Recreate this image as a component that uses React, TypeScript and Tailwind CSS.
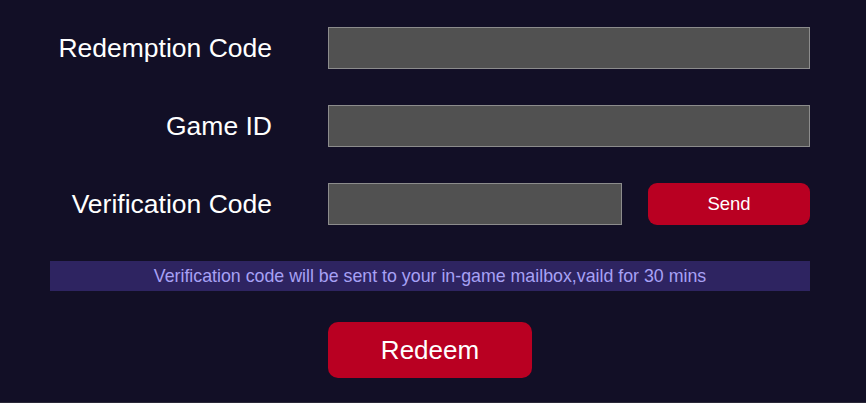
import React from "react";

function Row({ label, children }: { label: string; children: React.ReactNode }) {
  return (
    <div className="flex h-[42px] items-center">
      <div className="w-[272px] shrink-0 text-right text-[26.5px] leading-none text-white">{label}</div>
      <div className="ml-[56px] flex h-full w-[482px] items-stretch">{children}</div>
    </div>
  );
}

export default function App() {
  return (
    <div
      className="flex h-[403px] w-[866px] flex-col bg-[#120f26] pt-[27px] border-b border-[#2a2838]"
      style={{ fontFamily: '"Liberation Sans", Arial, sans-serif' }}
    >
      <div className="flex flex-col gap-[36px]">
        <Row label="Redemption Code">
          <input className="h-full w-full border border-[#8c8c8c] bg-[#515151] outline-none" />
        </Row>
        <Row label="Game ID">
          <input className="h-full w-full border border-[#8c8c8c] bg-[#515151] outline-none" />
        </Row>
        <Row label="Verification Code">
          <input className="h-full w-[294px] border border-[#8c8c8c] bg-[#515151] outline-none" />
          <button className="ml-[26px] h-full w-[162px] rounded-[9px] bg-[#b90022] text-[18.5px] text-white">
            Send
          </button>
        </Row>
      </div>
      <div className="mt-[36px] ml-[50px] flex h-[30px] w-[760px] items-center justify-center bg-[#2e2461] text-[17.8px] text-[#a7a1f5]">
        Verification code will be sent to your in-game mailbox,vaild for 30 mins
      </div>
      <button className="mt-[31px] ml-[328px] h-[56px] w-[204px] rounded-[10px] bg-[#b90022] text-[26px] text-white">
        Redeem
      </button>
    </div>
  );
}
